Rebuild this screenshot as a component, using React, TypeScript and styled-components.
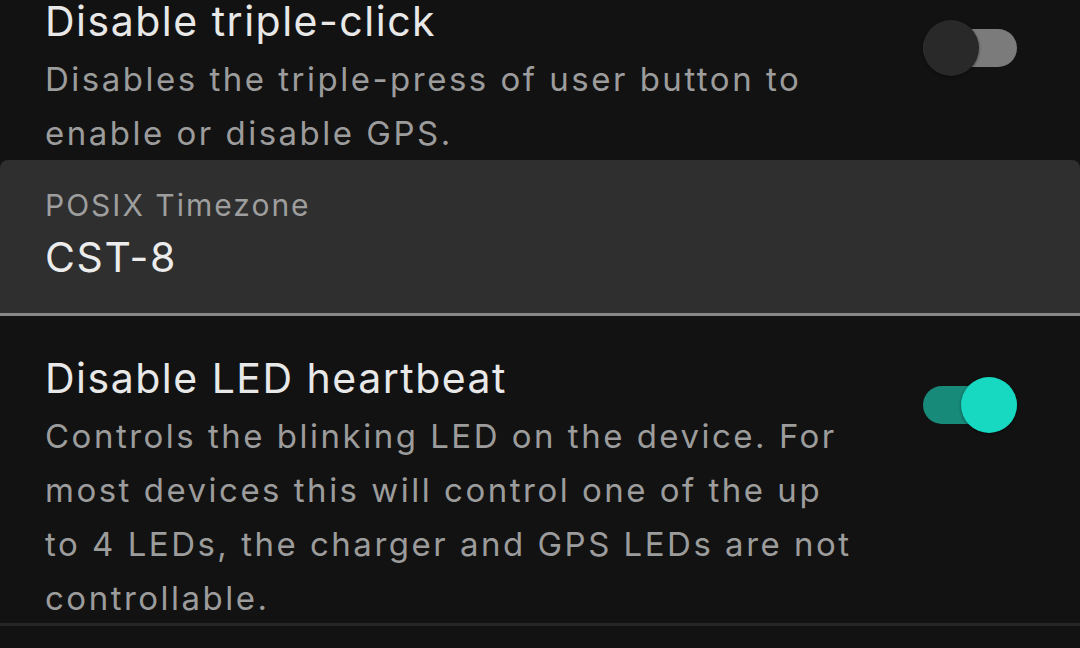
import React from "react";
import styled, { createGlobalStyle } from "styled-components";

const GlobalStyle = createGlobalStyle`
  html, body {
    margin: 0;
    padding: 0;
    background: #121212;
    overflow: hidden;
  }
  body {
    font-family: Inter, "Noto Sans", sans-serif;
  }
`;

const Page = styled.div`
  width: 1080px;
  height: 648px;
  background: #121212;
  overflow: hidden;
`;

const List = styled.div`
  display: flex;
  flex-direction: column;
  margin-top: -41px;
`;

const SwitchRow = styled.div<{ $divider?: boolean }>`
  display: flex;
  justify-content: space-between;
  align-items: flex-start;
  padding: 37px 63px 0 45px;
  border-bottom: ${(p) => (p.$divider ? "3px solid #262626" : "none")};
`;

const TextBlock = styled.div`
  display: flex;
  flex-direction: column;
  gap: 6px;
  max-width: 840px;
`;

const Title = styled.div`
  font-size: 41px;
  line-height: 50px;
  letter-spacing: 1.5px;
  color: #e8e8e8;
`;

const Description = styled.div`
  font-size: 33px;
  line-height: 54px;
  letter-spacing: 2.5px;
  color: #9c9c9c;
  margin-bottom: -2px;
`;

const Track = styled.div<{ $on: boolean }>`
  position: relative;
  flex: none;
  width: 94px;
  height: 56px;
  margin-top: 24px;

  &::before {
    content: "";
    position: absolute;
    left: 0;
    right: 0;
    top: 9px;
    height: 38px;
    border-radius: 19px;
    background: ${(p) => (p.$on ? "#178a7a" : "#7b7b7b")};
  }
`;

const Thumb = styled.div<{ $on: boolean }>`
  position: absolute;
  top: 0;
  left: ${(p) => (p.$on ? "38px" : "0")};
  width: 56px;
  height: 56px;
  border-radius: 50%;
  background: ${(p) => (p.$on ? "#17d9c2" : "#292929")};
  box-shadow: 0 1px 3px rgba(0, 0, 0, 0.45);
`;

const Field = styled.div`
  display: flex;
  flex-direction: column;
  height: 127px;
  padding: 26px 45px 0;
  background: #2f2f2f;
  border-radius: 8px 8px 0 0;
  border-bottom: 3px solid #888888;
  margin-top: 2px;
`;

const FieldLabel = styled.div`
  font-size: 30px;
  line-height: 38px;
  letter-spacing: 2px;
  color: #9e9e9e;
`;

const FieldValue = styled.div`
  font-size: 41px;
  line-height: 56px;
  letter-spacing: 1.6px;
  color: #ececec;
  margin-top: 5px;
`;

const Switch = ({ on }: { on: boolean }) => (
  <Track $on={on}>
    <Thumb $on={on} />
  </Track>
);

export default function App() {
  return (
    <Page>
      <GlobalStyle />
      <List>
        <SwitchRow>
          <TextBlock>
            <Title>Disable triple-click</Title>
            <Description>
              Disables the triple-press of user button to
              <br />
              enable or disable GPS.
            </Description>
          </TextBlock>
          <Switch on={false} />
        </SwitchRow>
        <Field>
          <FieldLabel>POSIX Timezone</FieldLabel>
          <FieldValue>CST-8</FieldValue>
        </Field>
        <SwitchRow $divider>
          <TextBlock>
            <Title>Disable LED heartbeat</Title>
            <Description>
              Controls the blinking LED on the device. For
              <br />
              most devices this will control one of the up
              <br />
              to 4 LEDs, the charger and GPS LEDs are not
              <br />
              controllable.
            </Description>
          </TextBlock>
          <Switch on={true} />
        </SwitchRow>
      </List>
    </Page>
  );
}
